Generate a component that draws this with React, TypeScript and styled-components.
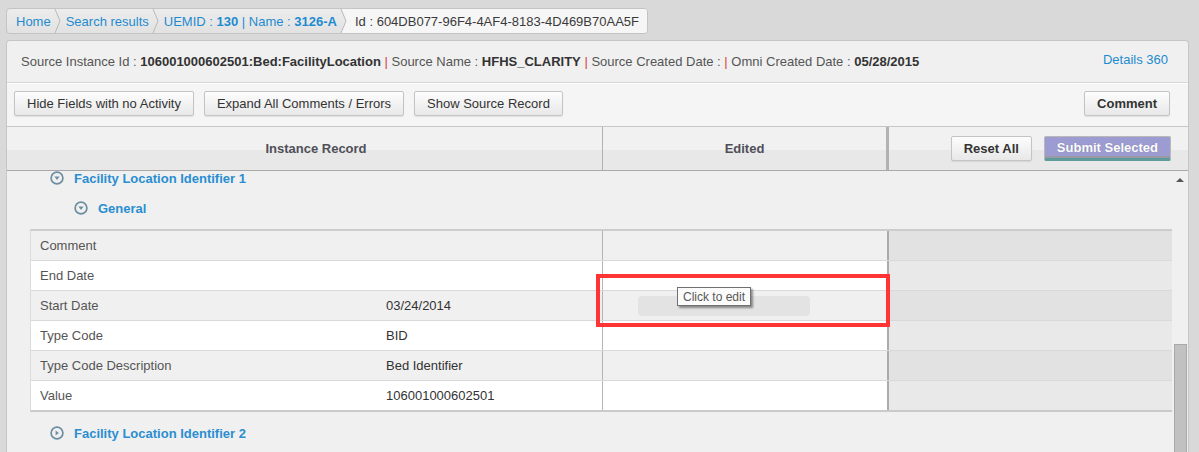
import React from "react";
import styled, { createGlobalStyle } from "styled-components";

const GlobalStyle = createGlobalStyle`
  *, *::before, *::after { box-sizing: border-box; }
  html, body { margin: 0; padding: 0; }
  body {
    background: #d9d9d9;
    font-family: "Liberation Sans", Arial, sans-serif;
    font-size: 13px;
    color: #555;
  }
`;

const FONT = `"Liberation Sans", Arial, sans-serif`;
const LINK = "#1e8bd0";
const ICON = "#6e8ea2";

const Page = styled.div`
  height: 452px;
  padding: 8px 10px 0 6px;
  display: flex;
  flex-direction: column;
  overflow: hidden;
`;

/* breadcrumb */
const Breadcrumb = styled.nav`
  align-self: flex-start;
  display: flex;
  height: 26px;
  margin-bottom: 6px;
  border: 1px solid #c4c4c4;
  border-radius: 4px;
  background: linear-gradient(#ececec, #e2e2e2);
  overflow: hidden;
`;

const Crumb = styled.a<{ $current?: boolean; $first?: boolean }>`
  display: flex;
  align-items: center;
  white-space: nowrap;
  text-decoration: none;
  padding: 0 ${(p) => (p.$current ? "8px" : "0")} 0 ${(p) => (p.$first ? "9px" : p.$current ? "8px" : "0")};
  color: ${(p) => (p.$current ? "#3a3a3a" : LINK)};
  background: ${(p) => (p.$current ? "#f6f6f6" : "transparent")};
  b {
    font-weight: bold;
  }
`;

const SepBox = styled.span<{ $active?: boolean }>`
  display: flex;
  margin: 0 ${(p) => (p.$active ? "0" : "5px")} 0 3px;
`;

const Separator = ({ active }: { active?: boolean }) => (
  <SepBox $active={active}>
    <svg width="7" height="24" viewBox="0 0 7 24">
      {active && <polygon points="1,0 7,0 7,24 1,24 6,12" fill="#f6f6f6" />}
      <polyline points="1,0 6,12 1,24" fill="none" stroke="#b9b9b9" strokeWidth="1" />
    </svg>
  </SepBox>
);

/* panel */
const Panel = styled.section`
  flex: 1;
  min-height: 0;
  display: flex;
  flex-direction: column;
  background: #f0f0f0;
  border: 1px solid #c6c6c6;
  border-bottom: none;
  border-radius: 4px 4px 0 0;
  overflow: hidden;
`;

const InfoBar = styled.div`
  height: 42px;
  flex: none;
  display: flex;
  align-items: center;
  justify-content: space-between;
  padding: 0 20px 0 14px;
  border-bottom: 1px solid #d8d8d8;
  white-space: nowrap;
  b {
    color: #333;
  }
`;

const Pipe = styled.span`
  color: #d43f3a;
`;

const DetailsLink = styled.a`
  color: ${LINK};
  text-decoration: none;
  margin-bottom: 4px;
`;

const Toolbar = styled.div`
  height: 44px;
  flex: none;
  display: flex;
  align-items: center;
  gap: 10px;
  padding: 0 18px 3px 7px;
  background: #f5f5f5;
  box-shadow: inset 0 1px #ffffff;
  border-bottom: 1px solid #c6c6c6;
`;

const Spacer = styled.div`
  flex: 1;
`;

const Button = styled.button<{ $bold?: boolean }>`
  height: 25px;
  padding: 0 12px;
  font: ${(p) => (p.$bold ? "bold" : "normal")} 13px ${FONT};
  color: #333;
  background: linear-gradient(#fdfdfd, #e8e8e8);
  border: 1px solid #c4c4c4;
  border-radius: 2px;
  box-shadow: 0 1px 1px rgba(0, 0, 0, 0.08);
  white-space: nowrap;
  cursor: pointer;
`;

const SubmitButton = styled(Button)`
  color: #fff;
  background: #9c9cd2;
  border-color: #b8b8b8;
  border-bottom: 3px solid #5e9c9c;
  box-shadow: inset 0 -2px #9a9aa6;
  text-shadow: 0 0 1px rgba(0, 0, 0, 0.25);
`;

/* grid header */
const HeaderRow = styled.div`
  height: 44px;
  flex: none;
  display: grid;
  grid-template-columns: 596px 286px 1fr;
  background: linear-gradient(#f1f1f1 0 23px, #e8e8e8 23px);
  border-bottom: 1px solid #a9a9a9;
`;

const HeadCell = styled.div<{ $rule?: number; $indent?: number }>`
  display: flex;
  align-items: center;
  justify-content: center;
  padding-left: ${(p) => p.$indent ?? 0}px;
  font-weight: bold;
  color: #4f4f58;
  border-right: ${(p) => p.$rule ?? 0}px solid #b2b2b2;
`;

const HeadActions = styled.div`
  display: flex;
  align-items: center;
  justify-content: flex-end;
  gap: 12px;
  padding: 0 17px 0 0;
`;

/* scrolling body */
const ScrollBody = styled.div`
  flex: 1;
  min-height: 0;
  display: flex;
  overflow: hidden;
`;

const Content = styled.div`
  flex: 1;
  min-width: 0;
  margin-top: -8px;
`;

const SectionTitle = styled.div<{ $level: number }>`
  height: 30px;
  display: flex;
  align-items: center;
  gap: 10px;
  padding-left: ${(p) => 43 + p.$level * 24}px;
  color: #2a8ed0;
  font-weight: bold;
`;

const CircleIcon = ({ dir }: { dir: "down" | "right" }) => (
  <svg width="14" height="14" viewBox="0 0 14 14">
    <circle cx="7" cy="7" r="5.9" fill="none" stroke={ICON} strokeWidth="1.7" />
    {dir === "down" ? (
      <polygon points="4.4,5.6 9.6,5.6 7,8.9" fill={ICON} />
    ) : (
      <polygon points="5.6,4.4 5.6,9.6 8.9,7" fill={ICON} />
    )}
  </svg>
);

const Table = styled.div`
  margin: 6px 0 6px 23px;
  border-top: 2px solid #cdcdcd;
  border-left: 1px solid #dcdcdc;
  border-bottom: 2px solid #cacaca;
`;

const Row = styled.div<{ $alt: boolean }>`
  height: 30px;
  display: grid;
  grid-template-columns: 345px 227px 286px 1fr;
  background: ${(p) => (p.$alt ? "#f0f0f0" : "#ffffff")};
  border-bottom: 1px solid #d9d9d9;
  &:last-child {
    border-bottom: none;
    height: 29px;
  }
`;

const Label = styled.div`
  display: flex;
  align-items: center;
  padding-left: 9px;
  color: #555;
`;

const Value = styled.div`
  display: flex;
  align-items: center;
  padding-left: 10px;
  color: #333;
  border-right: 1px solid #b4b4b4;
`;

const EditCell = styled.div`
  position: relative;
  display: flex;
  align-items: center;
  padding-left: 35px;
  border-right: 2px solid #ababab;
`;

const SideCell = styled.div<{ $alt: boolean }>`
  background: ${(p) => (p.$alt ? "#e2e2e2" : "#e9e9e9")};
`;

const EditSlot = styled.div`
  width: 172px;
  height: 20px;
  border-radius: 4px;
  background: #e3e3e3;
`;

const Tooltip = styled.div`
  position: absolute;
  left: 74px;
  top: -4px;
  z-index: 4;
  height: 19px;
  padding: 0 5px;
  display: flex;
  align-items: center;
  font: 12px ${FONT};
  color: #575757;
  white-space: nowrap;
  background: #fbfbfb;
  border: 1px solid #707070;
  box-shadow: 2px 2px 2px rgba(0, 0, 0, 0.4);
`;

const Highlight = styled.div`
  position: absolute;
  left: -7px;
  top: -17px;
  width: 294px;
  height: 53px;
  z-index: 5;
  border: 4px solid #ff3535;
  pointer-events: none;
`;

const Scrollbar = styled.div`
  width: 16px;
  flex: none;
  display: flex;
  flex-direction: column;
  align-items: center;
  background: #f0f0f0;
`;

const ScrollArrow = styled.div`
  margin-top: 7px;
  width: 0;
  height: 0;
  border-left: 4px solid transparent;
  border-right: 4px solid transparent;
  border-bottom: 4px solid #555;
`;

const ScrollThumb = styled.div`
  margin-top: auto;
  width: 13px;
  height: 108px;
  background: #c1c1c1;
  border: 1px solid #a9a9a9;
  border-bottom: none;
`;

type Field = { label: string; value: string; editing?: boolean };

const fields: Field[] = [
  { label: "Comment", value: "" },
  { label: "End Date", value: "" },
  { label: "Start Date", value: "03/24/2014", editing: true },
  { label: "Type Code", value: "BID" },
  { label: "Type Code Description", value: "Bed Identifier" },
  { label: "Value", value: "106001000602501" },
];

const App = () => {
  return (
    <>
      <GlobalStyle />
      <Page>
        <Breadcrumb>
          <Crumb $first>Home</Crumb>
          <Separator />
          <Crumb>Search results</Crumb>
          <Separator />
          <Crumb>
            UEMID :&nbsp;<b>130</b>&nbsp;| Name :&nbsp;<b>3126-A</b>
          </Crumb>
          <Separator active />
          <Crumb $current>Id : 604DB077-96F4-4AF4-8183-4D469B70AA5F</Crumb>
        </Breadcrumb>

        <Panel>
          <InfoBar>
            <span>
              Source Instance Id : <b>106001000602501:Bed:FacilityLocation</b>
              <Pipe> | </Pipe>Source Name : <b>HFHS_CLARITY</b>
              <Pipe> | </Pipe>Source Created Date : <Pipe>| </Pipe>Omni Created Date :{" "}
              <b>05/28/2015</b>
            </span>
            <DetailsLink>Details 360</DetailsLink>
          </InfoBar>

          <Toolbar>
            <Button>Hide Fields with no Activity</Button>
            <Button>Expand All Comments / Errors</Button>
            <Button>Show Source Record</Button>
            <Spacer />
            <Button $bold>Comment</Button>
          </Toolbar>

          <HeaderRow>
            <HeadCell $rule={1} $indent={23}>
              Instance Record
            </HeadCell>
            <HeadCell $rule={3}>Edited</HeadCell>
            <HeadActions>
              <Button $bold>Reset All</Button>
              <SubmitButton $bold>Submit Selected</SubmitButton>
            </HeadActions>
          </HeaderRow>

          <ScrollBody>
            <Content>
              <SectionTitle $level={0}>
                <CircleIcon dir="down" />
                Facility Location Identifier 1
              </SectionTitle>
              <SectionTitle $level={1}>
                <CircleIcon dir="down" />
                General
              </SectionTitle>
              <Table>
                {fields.map((f, i) => (
                  <Row key={f.label} $alt={i % 2 === 0}>
                    <Label>{f.label}</Label>
                    <Value>{f.value}</Value>
                    <EditCell>
                      {f.editing && (
                        <>
                          <EditSlot />
                          <Tooltip>Click to edit</Tooltip>
                          <Highlight />
                        </>
                      )}
                    </EditCell>
                    <SideCell $alt={i % 2 === 0} />
                  </Row>
                ))}
              </Table>
              <SectionTitle $level={0}>
                <CircleIcon dir="right" />
                Facility Location Identifier 2
              </SectionTitle>
            </Content>
            <Scrollbar>
              <ScrollArrow />
              <ScrollThumb />
            </Scrollbar>
          </ScrollBody>
        </Panel>
      </Page>
    </>
  );
};

export default App;
